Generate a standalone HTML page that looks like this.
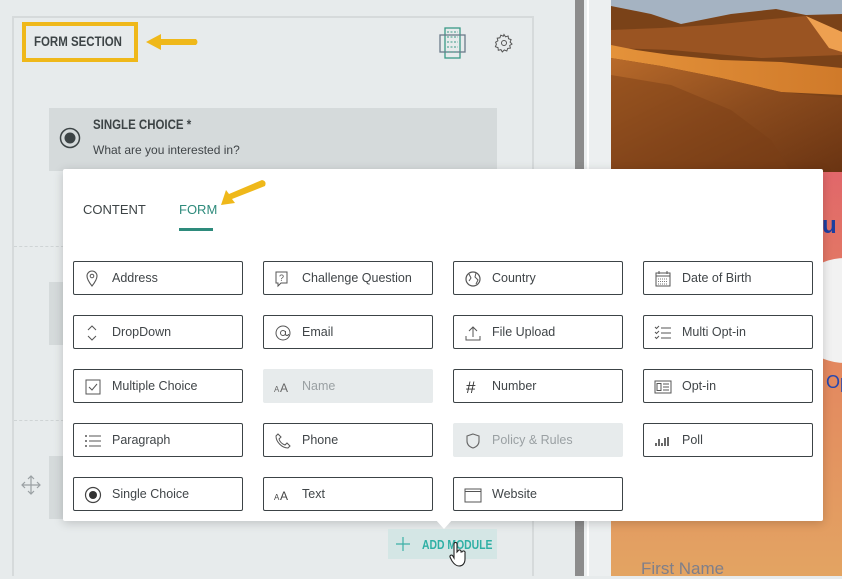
<!DOCTYPE html>
<html><head><meta charset="utf-8"><style>
*{box-sizing:border-box;margin:0;padding:0}
body{width:842px;height:576px;overflow:hidden;background:#e7ebec;font-family:"Liberation Sans",sans-serif;position:relative;color:#404548}
.abs{position:absolute}
.cond{font-weight:bold;transform:scaleX(.85);transform-origin:left center;white-space:nowrap}
.btn{position:absolute;width:170px;height:34px;border:1.5px solid #3c4346;border-radius:2px;background:#fff;font-size:12.5px;color:#404548}
.btn span{position:absolute;left:38px;top:9px;white-space:nowrap}
.btn svg{position:absolute;left:10px;top:8px}
.dis{border:none;background:#e7ebec;color:#9aa0a3}
</style></head><body>
<div class="abs" style="left:12px;top:16px;width:522px;height:560px;border:2px solid #d6dadb;border-bottom:none"></div>
<div class="abs" style="left:22px;top:22px;width:116px;height:40px;border:4px solid #efb81a"></div>
<div class="abs cond" style="left:34px;top:34px;font-size:13.5px;color:#3d4446">FORM SECTION</div>
<svg class="abs" style="left:143px;top:32px" width="58" height="20"><path d="M3 10 L18 2 L18 7 L53 7 Q56 10 53 13 L18 13 L18 18 Z" fill="#efb81a"/></svg>
<svg class="abs" style="left:438px;top:27px" width="30" height="32"><rect x="7" y="1" width="15" height="30" fill="none" stroke="#3a9a86" stroke-width="1.3"/><rect x="2" y="8" width="25" height="17" fill="none" stroke="#6a7a8a" stroke-width="1.3"/><path d="M9 5h11M9 10h11M9 15h11M9 20h11M9 25h11" stroke="#3a9a86" stroke-dasharray="2 1.5"/></svg>
<svg class="abs" style="left:494px;top:33px" width="20" height="20" viewBox="0 0 20 20"><path d="M10 1.5l1.5 2.3 2.6-.8.4 2.7 2.6.9-1 2.5 1.9 1.9-2.3 1.5.7 2.6-2.7.3-.9 2.6-2.5-1-2 1.9-1.4-2.3-2.6.7-.3-2.7-2.6-.9 1-2.5L1.6 9.2l2.3-1.4-.7-2.6 2.7-.4.9-2.6 2.5 1z" fill="none" stroke="#555" stroke-width="1"/><circle cx="10" cy="10" r="2.5" fill="none" stroke="#555"/></svg>
<div class="abs" style="left:49px;top:108px;width:448px;height:63px;background:#d5dadb"></div>
<svg class="abs" style="left:59px;top:127px" width="22" height="22"><circle cx="11" cy="11" r="9.5" fill="none" stroke="#3d4446" stroke-width="1.5"/><circle cx="11" cy="11" r="5.5" fill="#3d4446"/></svg>
<div class="abs cond" style="left:93px;top:117px;font-size:13.5px;color:#3d4446">SINGLE CHOICE *</div>
<div class="abs" style="left:93px;top:143px;font-size:12px;color:#404548">What are you interested in?</div>
<div class="abs" style="left:14px;top:246px;width:50px;border-top:1px dashed #cfd4d5"></div>
<div class="abs" style="left:14px;top:420px;width:50px;border-top:1px dashed #cfd4d5"></div>
<div class="abs" style="left:49px;top:282px;width:14px;height:63px;background:#d5dadb"></div>
<div class="abs" style="left:49px;top:456px;width:14px;height:63px;background:#d5dadb"></div>
<svg class="abs" style="left:21px;top:475px" width="20" height="20"><path d="M10 1v18M1 10h18M7 4l3-3 3 3M7 16l3 3 3-3M4 7l-3 3 3 3M16 7l3 3-3 3" fill="none" stroke="#9aa0a3" stroke-width="1.2"/></svg>
<div class="abs" style="left:575px;top:0;width:9px;height:576px;background:#8c8c8c"></div>
<div class="abs" style="left:584px;top:0;width:27px;height:576px;background:#eceff0"></div>
<div class="abs" style="left:587px;top:0;width:2px;height:576px;background:#fff"></div>
<div class="abs" style="left:611px;top:172px;width:231px;height:404px;background:linear-gradient(#e1676a,#e3865f 45%,#e3a462)"></div>
<div class="abs" style="left:790px;top:258px;width:110px;height:105px;border-radius:50%;background:#f2f2f2"></div>
<div class="abs" style="left:822px;top:212px;font-size:24px;font-weight:bold;color:#1d3ea0">u</div>
<div class="abs" style="left:826px;top:372px;font-size:18px;color:#2547b0">Op</div>
<div class="abs" style="left:641px;top:559px;font-size:17px;color:#7f7f8a">First Name</div>
<svg class="abs" style="left:611px;top:0" width="231" height="172" viewBox="0 0 231 172">
<defs>
<linearGradient id="g" x1="0" y1="0" x2="1" y2="1"><stop offset="0" stop-color="#b86a2a"/><stop offset=".5" stop-color="#8c4c1e"/><stop offset="1" stop-color="#6a3412"/></linearGradient>
<linearGradient id="h" x1="0" y1="0" x2="1" y2="0"><stop offset="0" stop-color="#e4923a"/><stop offset="1" stop-color="#d07a2a"/></linearGradient>
</defs>
<rect width="231" height="172" fill="#a5b3c2"/>
<path d="M0 6 L40 14 L70 24 L120 14 L165 9 L195 15 L231 14 L231 172 L0 172Z" fill="#7a4218"/>
<path d="M0 30 L50 28 L100 25 L150 20 L195 16 L231 40 L231 55 L150 58 L60 50 L0 48Z" fill="#9a5422"/>
<path d="M195 16 L231 32 L231 52 L218 48 Z" fill="#eea050"/>
<path d="M0 45 L25 50 L60 55 L110 60 L170 62 L231 68 L231 95 L170 92 L110 78 L50 66 L0 58Z" fill="url(#h)"/>
<path d="M0 58 L50 66 L110 78 L170 92 L231 98 L231 172 L0 172Z" fill="url(#g)"/>
<path d="M0 75 L60 85 L120 110 L160 140 L180 172 L0 172Z" fill="#7a3e16" opacity=".45"/>
</svg>
<div class="abs" style="left:63px;top:169px;width:760px;height:352px;background:#fff;border-radius:2px;box-shadow:0 2px 10px rgba(0,0,0,.18)"></div>
<div class="abs" style="left:435px;top:519px;width:0;height:0;border-left:9px solid transparent;border-right:9px solid transparent;border-top:10px solid #fff"></div>
<div class="abs" style="left:83px;top:202px;font-size:13px;color:#3d4446">CONTENT</div>
<div class="abs" style="left:179px;top:202px;font-size:13px;color:#2e8b7c">FORM</div>
<div class="abs" style="left:179px;top:228px;width:34px;height:3px;background:#2e8b7c"></div>
<svg class="abs" style="left:218px;top:178px" width="52" height="30"><path d="M3 27 L8 12 L11 16 L44 2 Q49 3 47 8 L14 21 L17 25Z" fill="#efb81a"/></svg>

<div class="btn" style="left:73px;top:261px"><svg width="16" height="18"><path d="M8 16C4 11 3 8 3 6a5 5 0 0110 0c0 2-1 5-5 10z" fill="none" stroke="#555" stroke-width="1.1"/><circle cx="8" cy="6" r="1.8" fill="none" stroke="#555"/></svg><span>Address</span></div>
<div class="btn" style="left:263px;top:261px"><svg width="16" height="18"><path d="M2 2h11v11H7l-3 3v-3H2z" fill="none" stroke="#555" stroke-width="1"/><text x="5" y="11" font-size="9" fill="#555" font-family="Liberation Sans">?</text></svg><span>Challenge Question</span></div>
<div class="btn" style="left:453px;top:261px"><svg width="18" height="18"><circle cx="9" cy="9" r="7" fill="none" stroke="#555" stroke-width="1.2"/><path d="M5 4l2 4-2 3M12 3l-1 4 3 3-2 4" fill="none" stroke="#555"/></svg><span>Country</span></div>
<div class="btn" style="left:643px;top:261px"><svg width="18" height="18"><rect x="2" y="3" width="14" height="13" fill="none" stroke="#555"/><path d="M2 6h14M5 1v3M13 1v3" stroke="#555"/><path d="M4 9h10M4 11.5h10M4 14h10" stroke="#777" stroke-dasharray="1 1"/></svg><span>Date of Birth</span></div>

<div class="btn" style="left:73px;top:315px"><svg width="16" height="18"><path d="M4 6l4-4 4 4M4 12l4 4 4-4" fill="none" stroke="#555"/></svg><span>DropDown</span></div>
<div class="btn" style="left:263px;top:315px"><svg width="18" height="18"><circle cx="9" cy="9" r="7" fill="none" stroke="#555"/><circle cx="9" cy="9" r="2.5" fill="none" stroke="#555"/><path d="M11.5 7v3a1.5 1.5 0 003 0" fill="none" stroke="#555"/></svg><span>Email</span></div>
<div class="btn" style="left:453px;top:315px"><svg width="18" height="18"><path d="M9 13V3M5 7l4-4 4 4M2 12v4h14v-4" fill="none" stroke="#555"/></svg><span>File Upload</span></div>
<div class="btn" style="left:643px;top:315px"><svg width="18" height="18"><path d="M7 4h10M7 9h10M7 14h10M1 3l1.5 1.5L5 2M1 8l1.5 1.5L5 7M1 13l1.5 1.5L5 12" fill="none" stroke="#555"/></svg><span>Multi Opt-in</span></div>

<div class="btn" style="left:73px;top:369px"><svg width="18" height="18"><rect x="2" y="2" width="14" height="14" fill="none" stroke="#555"/><path d="M5 9l3 3 5-6" fill="none" stroke="#555"/></svg><span>Multiple Choice</span></div>
<div class="btn dis" style="left:263px;top:369px"><svg width="20" height="18" style="left:11px;top:9px"><text x="0" y="14" font-size="8" fill="#666" font-family="Liberation Sans">A</text><text x="6" y="14" font-size="12" fill="#666" font-family="Liberation Sans">A</text></svg><span style="left:39px;top:10px">Name</span></div>
<div class="btn" style="left:453px;top:369px"><svg width="18" height="18"><text x="2" y="15" font-size="17" fill="#333" font-family="Liberation Sans">#</text></svg><span>Number</span></div>
<div class="btn" style="left:643px;top:369px"><svg width="18" height="18"><rect x="1" y="3" width="16" height="12" fill="none" stroke="#555"/><rect x="3" y="5.5" width="4" height="7" fill="none" stroke="#555"/><path d="M9 6h6M9 9h6M9 12h6" stroke="#555"/></svg><span>Opt-in</span></div>

<div class="btn" style="left:73px;top:423px"><svg width="18" height="18"><path d="M5 4h12M5 9h12M5 14h12" stroke="#555"/><path d="M1 4h2M1 9h2M1 14h2" stroke="#555" stroke-width="1.5"/></svg><span>Paragraph</span></div>
<div class="btn" style="left:263px;top:423px"><svg width="18" height="18"><path d="M4 2l3 3-2 2c1 3 3 5 6 6l2-2 3 3-2 2C8 16 2 10 2 4z" fill="none" stroke="#555"/></svg><span>Phone</span></div>
<div class="btn dis" style="left:453px;top:423px"><svg width="18" height="18" style="left:11px;top:9px"><path d="M9 2l6 2v5c0 4-3 6-6 7-3-1-6-3-6-7V4z" fill="none" stroke="#666" stroke-width="1.1"/></svg><span style="left:39px;top:10px">Policy &amp; Rules</span></div>
<div class="btn" style="left:643px;top:423px"><svg width="18" height="18"><path d="M2 14v-3M5 14V7M8 14v-3M11 14V6M14 14V5" stroke="#444" stroke-width="1.6"/></svg><span>Poll</span></div>

<div class="btn" style="left:73px;top:477px"><svg width="18" height="18"><circle cx="9" cy="9" r="7.5" fill="none" stroke="#444" stroke-width="1.2"/><circle cx="9" cy="9" r="4" fill="#333"/></svg><span>Single Choice</span></div>
<div class="btn" style="left:263px;top:477px"><svg width="20" height="18"><text x="0" y="14" font-size="8" fill="#444" font-family="Liberation Sans">A</text><text x="6" y="14" font-size="12" fill="#444" font-family="Liberation Sans">A</text></svg><span>Text</span></div>
<div class="btn" style="left:453px;top:477px"><svg width="18" height="18"><rect x="1" y="3" width="16" height="13" fill="none" stroke="#555"/><path d="M1 5.5h16" stroke="#555"/></svg><span>Website</span></div>

<div class="abs" style="left:388px;top:529px;width:109px;height:30px;background:#d4e6e5"></div>
<svg class="abs" style="left:396px;top:537px" width="14" height="14"><path d="M7 0v14M0 7h14" stroke="#3cb0a6" stroke-width="1.2"/></svg>
<div class="abs cond" style="left:422px;top:537px;font-size:13px;color:#2fb0a5;transform:scaleX(.8)">ADD MODULE</div>
<svg class="abs" style="left:448px;top:542px" width="20" height="26"><path d="M6 2a1.5 1.5 0 013 0v8l1-1a1.5 1.5 0 013 1l1 0a1.5 1.5 0 013 1v6c0 4-2 7-6 7-3 0-5-2-7-5l-2-4a1.5 1.5 0 012.5-1.5L6 16z" fill="#fff" stroke="#222" stroke-width="1.1"/></svg>
</body></html>
